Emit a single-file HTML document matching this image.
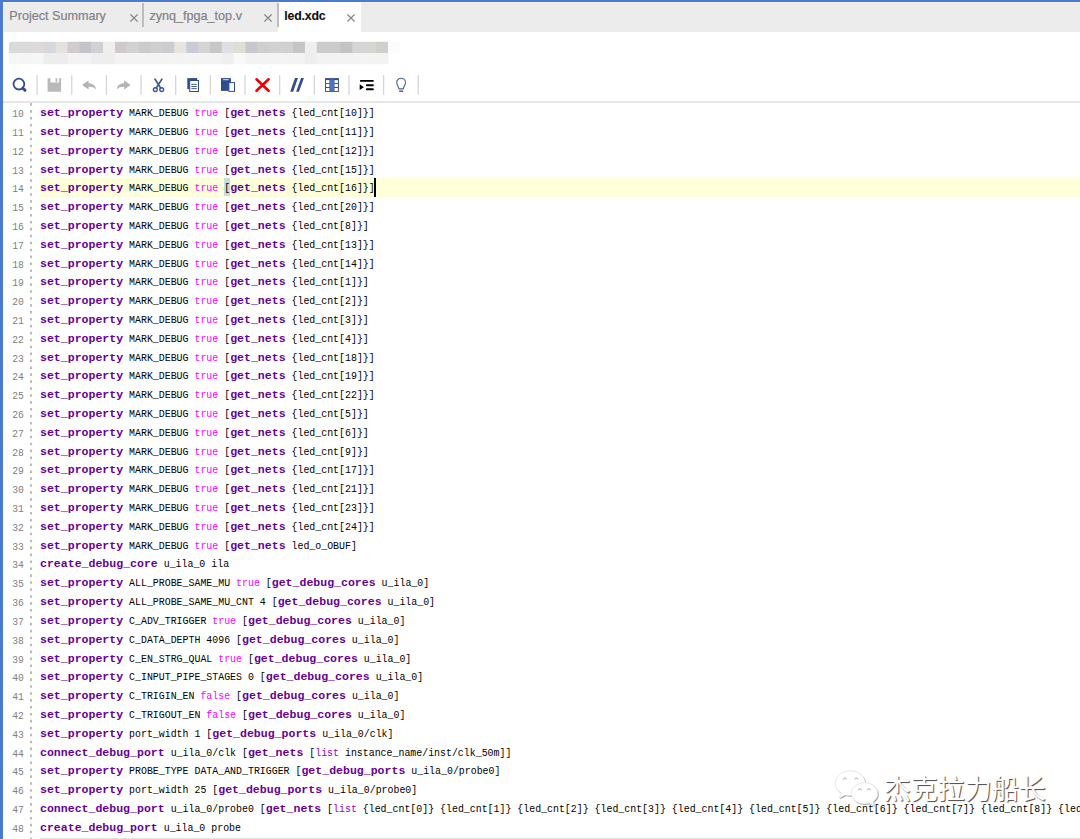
<!DOCTYPE html>
<html lang="en"><head><meta charset="utf-8"><title>led.xdc</title>
<style>
html,body{margin:0;padding:0;background:#fff;overflow:hidden;}
body{width:1080px;height:839px;overflow:hidden;position:relative;font-family:"Liberation Sans",sans-serif;}
#bt{position:absolute;left:0;top:0;width:1080px;height:2px;background:#4a7bd0;}
#bl{position:absolute;left:0;top:0;width:3px;height:839px;background:#4a7bd0;}
#tabs{position:absolute;left:3px;top:2px;width:1077px;height:30px;background:#ececec;box-sizing:border-box;border-left:1px solid #f6f4f0;border-top:1px solid #f3f1ee;}
#act{position:absolute;left:278px;top:2px;width:83px;height:30px;background:#fff;}
.ts{position:absolute;top:3px;width:2px;height:24px;background:#bdbdbd;}
.tl{position:absolute;top:8.8px;font-size:12.6px;line-height:15px;color:#808088;-webkit-text-stroke:0.2px #85858c;white-space:nowrap;}
.tx{position:absolute;top:14px;width:8px;height:8px;}
#hr{position:absolute;left:3px;top:101px;width:1077px;height:2px;background:#e6e6e6;}
#gut{position:absolute;left:30.3px;top:103px;width:2px;height:736px;}
#hl{position:absolute;left:40px;top:178px;width:1040px;height:19px;background:#ffffd9;}
#bm{position:absolute;left:224px;top:178px;width:6px;height:18px;background:#c6dde0;}
#car{position:absolute;left:374.4px;top:178px;width:2px;height:19px;background:#000;}
#sb{position:absolute;left:40px;top:838px;width:1040px;height:1px;background:#e3e3e3;}
.ln{position:absolute;left:1px;width:22.8px;height:12px;font:10px/12px "Liberation Mono",monospace;color:#808080;white-space:pre;text-align:right;transform-origin:100% 9px;transform:scale(0.97,1.16);}
.cl{position:absolute;left:39.8px;width:1300px;height:12px;font:10px/12px "Liberation Mono",monospace;color:#000;white-space:pre;transform-origin:0 9px;transform:scale(0.9903,1.1652);}
.cl b{font-weight:bold;color:#609;font-size:11.67px;display:inline-block;transform:scaleY(0.8499);transform-origin:0 9.1px;}
.cl i{font-style:normal;color:#f0f;}
.cl u{text-decoration:none;color:#90c;}
.ic{position:absolute;}
#wm{position:absolute;left:883.8px;top:770.8px;font:27px/38px "Liberation Sans","Noto Sans CJK SC",sans-serif;color:#fff;text-shadow:1px 1px 0.8px #4a4a4a;white-space:nowrap;}
.mz{position:absolute;}
</style></head>
<body>
<div id="tabs"></div><div id="act"></div>
<div id="bt"></div><div id="bl"></div>
<div class="ts" style="left:142px"></div><div class="ts" style="left:276.5px"></div>
<div class="tl" style="left:9.3px">Project Summary</div>
<div class="tl" style="left:149.5px">zynq_fpga_top.v</div>
<div class="tl" style="left:284.2px;color:#000;font-weight:bold;font-size:12.3px;letter-spacing:-0.15px">led.xdc</div>
<svg class="tx" style="left:129.7px" viewBox="0 0 8 8"><path d="M0.4 0.4L7.6 7.6M7.6 0.4L0.4 7.6" stroke="#8a8a8a" stroke-width="1.3" fill="none"/></svg>
<svg class="tx" style="left:264.4px" viewBox="0 0 8 8"><path d="M0.4 0.4L7.6 7.6M7.6 0.4L0.4 7.6" stroke="#8a8a8a" stroke-width="1.3" fill="none"/></svg>
<svg class="tx" style="left:346.9px" viewBox="0 0 8 8"><path d="M0.4 0.4L7.6 7.6M7.6 0.4L0.4 7.6" stroke="#8a8a8a" stroke-width="1.3" fill="none"/></svg>
<svg class="mz" style="left:0;top:36px" width="420" height="34" viewBox="0 36 420 34"><defs><clipPath id="mc"><rect x="8.9" y="41.5" width="392" height="23" rx="3.5"/></clipPath></defs><g clip-path="url(#mc)"><rect x="8.15" y="41.5" width="12.4" height="11.6" fill="#dbd9da"/><rect x="8.15" y="53" width="12.4" height="11.5" fill="#f6f6f6"/><rect x="20.02" y="41.5" width="12.4" height="11.6" fill="#d9dadc"/><rect x="20.02" y="53" width="12.4" height="11.5" fill="#f5f5f5"/><rect x="31.89" y="41.5" width="12.4" height="11.6" fill="#dedad8"/><rect x="31.89" y="53" width="12.4" height="11.5" fill="#f6f6f6"/><rect x="43.76" y="41.5" width="12.4" height="11.6" fill="#d6d8dc"/><rect x="43.76" y="53" width="12.4" height="11.5" fill="#ededed"/><rect x="55.63" y="41.5" width="12.4" height="11.6" fill="#e4e1de"/><rect x="55.63" y="53" width="12.4" height="11.5" fill="#ededed"/><rect x="67.50" y="41.5" width="12.4" height="11.6" fill="#cfcbcf"/><rect x="67.50" y="53" width="12.4" height="11.5" fill="#f3f3f3"/><rect x="79.37" y="41.5" width="12.4" height="11.6" fill="#c3c4c7"/><rect x="79.37" y="53" width="12.4" height="11.5" fill="#f3f3f3"/><rect x="91.24" y="41.5" width="12.4" height="11.6" fill="#d0d1d4"/><rect x="91.24" y="53" width="12.4" height="11.5" fill="#eeeeee"/><rect x="103.11" y="41.5" width="12.4" height="11.6" fill="#efefee"/><rect x="103.11" y="53" width="12.4" height="11.5" fill="#eeeeee"/><rect x="114.98" y="41.5" width="12.4" height="11.6" fill="#cdc9cc"/><rect x="114.98" y="53" width="12.4" height="11.5" fill="#f3f3f3"/><rect x="126.85" y="41.5" width="12.4" height="11.6" fill="#d0d3d1"/><rect x="126.85" y="53" width="12.4" height="11.5" fill="#f3f3f3"/><rect x="138.72" y="41.5" width="12.4" height="11.6" fill="#cec9cd"/><rect x="138.72" y="53" width="12.4" height="11.5" fill="#f3f3f3"/><rect x="150.59" y="41.5" width="12.4" height="11.6" fill="#cfcfcf"/><rect x="150.59" y="53" width="12.4" height="11.5" fill="#f3f3f3"/><rect x="162.46" y="41.5" width="12.4" height="11.6" fill="#cccbd0"/><rect x="162.46" y="53" width="12.4" height="11.5" fill="#f3f3f3"/><rect x="174.33" y="41.5" width="12.4" height="11.6" fill="#e8e5e0"/><rect x="174.33" y="53" width="12.4" height="11.5" fill="#f3f3f3"/><rect x="186.20" y="41.5" width="12.4" height="11.6" fill="#c9cdd3"/><rect x="186.20" y="53" width="12.4" height="11.5" fill="#f3f3f3"/><rect x="198.07" y="41.5" width="12.4" height="11.6" fill="#d5d3d4"/><rect x="198.07" y="53" width="12.4" height="11.5" fill="#f3f3f3"/><rect x="209.94" y="41.5" width="12.4" height="11.6" fill="#c8c6c8"/><rect x="209.94" y="53" width="12.4" height="11.5" fill="#f3f3f3"/><rect x="221.81" y="41.5" width="12.4" height="11.6" fill="#e0e0e3"/><rect x="221.81" y="53" width="12.4" height="11.5" fill="#efefef"/><rect x="233.68" y="41.5" width="12.4" height="11.6" fill="#dcdfd8"/><rect x="233.68" y="53" width="12.4" height="11.5" fill="#f8f9f8"/><rect x="245.55" y="41.5" width="12.4" height="11.6" fill="#c9c7cb"/><rect x="245.55" y="53" width="12.4" height="11.5" fill="#f3f3f3"/><rect x="257.42" y="41.5" width="12.4" height="11.6" fill="#cfcfcf"/><rect x="257.42" y="53" width="12.4" height="11.5" fill="#f3f3f3"/><rect x="269.29" y="41.5" width="12.4" height="11.6" fill="#d2d0d0"/><rect x="269.29" y="53" width="12.4" height="11.5" fill="#f3f3f3"/><rect x="281.16" y="41.5" width="12.4" height="11.6" fill="#d0d0d0"/><rect x="281.16" y="53" width="12.4" height="11.5" fill="#f3f3f3"/><rect x="293.03" y="41.5" width="12.4" height="11.6" fill="#c6c4c7"/><rect x="293.03" y="53" width="12.4" height="11.5" fill="#f3f3f3"/><rect x="304.90" y="41.5" width="12.4" height="11.6" fill="#efefef"/><rect x="304.90" y="53" width="12.4" height="11.5" fill="#eeeeee"/><rect x="316.77" y="41.5" width="12.4" height="11.6" fill="#cbcbcd"/><rect x="316.77" y="53" width="12.4" height="11.5" fill="#f3f3f3"/><rect x="328.64" y="41.5" width="12.4" height="11.6" fill="#cccacb"/><rect x="328.64" y="53" width="12.4" height="11.5" fill="#f3f3f3"/><rect x="340.51" y="41.5" width="12.4" height="11.6" fill="#c4c2c5"/><rect x="340.51" y="53" width="12.4" height="11.5" fill="#f3f3f3"/><rect x="352.38" y="41.5" width="12.4" height="11.6" fill="#d3d5d6"/><rect x="352.38" y="53" width="12.4" height="11.5" fill="#f3f3f3"/><rect x="364.25" y="41.5" width="12.4" height="11.6" fill="#d5d5d4"/><rect x="364.25" y="53" width="12.4" height="11.5" fill="#f3f3f3"/><rect x="376.12" y="41.5" width="12.4" height="11.6" fill="#d2ceca"/><rect x="376.12" y="53" width="12.4" height="11.5" fill="#f3f3f3"/><rect x="387.99" y="41.5" width="12.4" height="11.6" fill="#fbfcfe"/></g></svg>
<svg class="ic" style="left:0;top:70px" width="440" height="30" viewBox="0 70 440 30">
<path d="M37.10 75.3V94.7 M71.75 75.3V94.7 M106.40 75.3V94.7 M141.05 75.3V94.7 M175.70 75.3V94.7 M210.35 75.3V94.7 M245.00 75.3V94.7 M279.65 75.3V94.7 M314.30 75.3V94.7 M348.95 75.3V94.7 M383.60 75.3V94.7 M418.25 75.3V94.7" stroke="#d6d6d6" stroke-width="1.3" fill="none"/>
<g fill="none" stroke="#2f4d8d">
<circle cx="18.9" cy="84.1" r="5.4" stroke-width="1.8"/>
<path d="M22.9 88.2L25 90.3" stroke-width="3" stroke-linecap="round"/>
</g>
<path d="M47.6 78.3H50.4V82.6H59.1V78.3H61.1V91.7H47.6Z M55.5 78.3H57.2V82H55.5Z" fill="#b9b9b9"/>
<path d="M82.1 85L88.6 80.3V83.2C92.6 83.2 95.7 85.4 95.9 89.4C94.3 87.4 92 86.7 88.6 86.7V89.6Z" fill="#b4b4b4"/>
<path d="M130.6 85L124.1 80.3V83.2C120.1 83.2 117 85.4 116.8 89.4C118.4 87.4 120.7 86.7 124.1 86.7V89.6Z" fill="#b4b4b4"/>
<g fill="none" stroke="#3a5693">
<path d="M155 79.1L160.7 88.1M161.9 79.1L156.2 88.1" stroke-width="1.7" stroke-linecap="round"/>
<circle cx="155.3" cy="89.6" r="1.9" stroke-width="1.4"/><circle cx="161.7" cy="89.6" r="1.9" stroke-width="1.4"/>
</g>
<rect x="187.3" y="78.1" width="9.9" height="11" fill="#2f4d8d"/>
<rect x="189.7" y="80.5" width="8.8" height="11" fill="#fff" stroke="#2f4d8d" stroke-width="1"/>
<path d="M191.3 84.4H196.8M191.3 86.5H196.8M191.3 88.6H196.8" stroke="#2f4d8d" stroke-width="0.9" fill="none"/>
<rect x="221" y="78.1" width="9.9" height="12.8" fill="#2f4d8d"/>
<rect x="223.1" y="79.2" width="5.6" height="1" fill="#d9e0ee"/>
<rect x="228.9" y="82.6" width="5.6" height="8.8" fill="#fff" stroke="#2f4d8d" stroke-width="1"/>
<path d="M256.5 79.3L268.6 90.8M268.6 79.3L256.5 90.8" stroke="#ee0000" stroke-width="2.6" stroke-linecap="round" fill="none"/>
<path d="M295 78.1H298L293.1 91.7H290.2Z M301.1 78.1H303.9L298.9 91.7H296.1Z" fill="#2f4d8d"/>
<rect x="325.05" y="78.1" width="13.85" height="13.8" fill="#2f4d8d"/>
<rect x="329.8" y="79.4" width="4.3" height="11.6" fill="#4f72c0"/>
<g fill="#fff"><rect x="326" y="80.1" width="3.4" height="3"/><rect x="326" y="84" width="3.4" height="3"/><rect x="326" y="88" width="3.4" height="3"/>
<rect x="334.5" y="80.1" width="3.4" height="3"/><rect x="334.5" y="84" width="3.4" height="3"/><rect x="334.5" y="88" width="3.4" height="3"/></g>
<g fill="none" stroke="#000" stroke-width="1.9" stroke-linecap="round"><path d="M360.8 80.9H372.9M366.9 85.25H372.9M366.9 89.25H372.9"/></g>
<path d="M359.7 84.3L363.9 87.2L359.7 90.1Z" fill="#000"/>
<path d="M398.9 88.9C398.9 86.6 396.7 85.5 396.7 82.6A4.4 4.4 0 0 1 405.5 82.6C405.5 85.5 403.3 86.6 403.3 88.9Z" fill="none" stroke="#4a64a0" stroke-width="1.1"/>
<rect x="399.2" y="90.5" width="3.9" height="1.4" fill="#3a5693"/>
</svg>
<div id="hr"></div>
<svg id="gut" viewBox="0 0 2 736"><line x1="1" y1="0" x2="1" y2="736" stroke="#858585" stroke-width="1.1" stroke-dasharray="2.6 4.33" stroke-dashoffset="-0.1" /></svg>
<div id="hl"></div><div id="bm"></div>
<div class="ln" style="top:109.10px">10</div><div class="cl" style="top:107.10px"><b>set_property</b> MARK_DEBUG <i>true</i> [<b>get_nets</b> {led_cnt[10]}]</div>
<div class="ln" style="top:127.91px">11</div><div class="cl" style="top:125.91px"><b>set_property</b> MARK_DEBUG <i>true</i> [<b>get_nets</b> {led_cnt[11]}]</div>
<div class="ln" style="top:146.71px">12</div><div class="cl" style="top:144.71px"><b>set_property</b> MARK_DEBUG <i>true</i> [<b>get_nets</b> {led_cnt[12]}]</div>
<div class="ln" style="top:165.52px">13</div><div class="cl" style="top:163.52px"><b>set_property</b> MARK_DEBUG <i>true</i> [<b>get_nets</b> {led_cnt[15]}]</div>
<div class="ln" style="top:184.33px">14</div><div class="cl" style="top:182.33px"><b>set_property</b> MARK_DEBUG <i>true</i> [<b>get_nets</b> {led_cnt[16]}]</div>
<div class="ln" style="top:203.13px">15</div><div class="cl" style="top:201.13px"><b>set_property</b> MARK_DEBUG <i>true</i> [<b>get_nets</b> {led_cnt[20]}]</div>
<div class="ln" style="top:221.94px">16</div><div class="cl" style="top:219.94px"><b>set_property</b> MARK_DEBUG <i>true</i> [<b>get_nets</b> {led_cnt[8]}]</div>
<div class="ln" style="top:240.75px">17</div><div class="cl" style="top:238.75px"><b>set_property</b> MARK_DEBUG <i>true</i> [<b>get_nets</b> {led_cnt[13]}]</div>
<div class="ln" style="top:259.56px">18</div><div class="cl" style="top:257.56px"><b>set_property</b> MARK_DEBUG <i>true</i> [<b>get_nets</b> {led_cnt[14]}]</div>
<div class="ln" style="top:278.36px">19</div><div class="cl" style="top:276.36px"><b>set_property</b> MARK_DEBUG <i>true</i> [<b>get_nets</b> {led_cnt[1]}]</div>
<div class="ln" style="top:297.17px">20</div><div class="cl" style="top:295.17px"><b>set_property</b> MARK_DEBUG <i>true</i> [<b>get_nets</b> {led_cnt[2]}]</div>
<div class="ln" style="top:315.98px">21</div><div class="cl" style="top:313.98px"><b>set_property</b> MARK_DEBUG <i>true</i> [<b>get_nets</b> {led_cnt[3]}]</div>
<div class="ln" style="top:334.78px">22</div><div class="cl" style="top:332.78px"><b>set_property</b> MARK_DEBUG <i>true</i> [<b>get_nets</b> {led_cnt[4]}]</div>
<div class="ln" style="top:353.59px">23</div><div class="cl" style="top:351.59px"><b>set_property</b> MARK_DEBUG <i>true</i> [<b>get_nets</b> {led_cnt[18]}]</div>
<div class="ln" style="top:372.40px">24</div><div class="cl" style="top:370.40px"><b>set_property</b> MARK_DEBUG <i>true</i> [<b>get_nets</b> {led_cnt[19]}]</div>
<div class="ln" style="top:391.20px">25</div><div class="cl" style="top:389.20px"><b>set_property</b> MARK_DEBUG <i>true</i> [<b>get_nets</b> {led_cnt[22]}]</div>
<div class="ln" style="top:410.01px">26</div><div class="cl" style="top:408.01px"><b>set_property</b> MARK_DEBUG <i>true</i> [<b>get_nets</b> {led_cnt[5]}]</div>
<div class="ln" style="top:428.82px">27</div><div class="cl" style="top:426.82px"><b>set_property</b> MARK_DEBUG <i>true</i> [<b>get_nets</b> {led_cnt[6]}]</div>
<div class="ln" style="top:447.63px">28</div><div class="cl" style="top:445.63px"><b>set_property</b> MARK_DEBUG <i>true</i> [<b>get_nets</b> {led_cnt[9]}]</div>
<div class="ln" style="top:466.43px">29</div><div class="cl" style="top:464.43px"><b>set_property</b> MARK_DEBUG <i>true</i> [<b>get_nets</b> {led_cnt[17]}]</div>
<div class="ln" style="top:485.24px">30</div><div class="cl" style="top:483.24px"><b>set_property</b> MARK_DEBUG <i>true</i> [<b>get_nets</b> {led_cnt[21]}]</div>
<div class="ln" style="top:504.05px">31</div><div class="cl" style="top:502.05px"><b>set_property</b> MARK_DEBUG <i>true</i> [<b>get_nets</b> {led_cnt[23]}]</div>
<div class="ln" style="top:522.85px">32</div><div class="cl" style="top:520.85px"><b>set_property</b> MARK_DEBUG <i>true</i> [<b>get_nets</b> {led_cnt[24]}]</div>
<div class="ln" style="top:541.66px">33</div><div class="cl" style="top:539.66px"><b>set_property</b> MARK_DEBUG <i>true</i> [<b>get_nets</b> led_o_OBUF]</div>
<div class="ln" style="top:560.47px">34</div><div class="cl" style="top:558.47px"><b>create_debug_core</b> u_ila_0 ila</div>
<div class="ln" style="top:579.27px">35</div><div class="cl" style="top:577.27px"><b>set_property</b> ALL_PROBE_SAME_MU <i>true</i> [<b>get_debug_cores</b> u_ila_0]</div>
<div class="ln" style="top:598.08px">36</div><div class="cl" style="top:596.08px"><b>set_property</b> ALL_PROBE_SAME_MU_CNT 4 [<b>get_debug_cores</b> u_ila_0]</div>
<div class="ln" style="top:616.89px">37</div><div class="cl" style="top:614.89px"><b>set_property</b> C_ADV_TRIGGER <i>true</i> [<b>get_debug_cores</b> u_ila_0]</div>
<div class="ln" style="top:635.70px">38</div><div class="cl" style="top:633.70px"><b>set_property</b> C_DATA_DEPTH 4096 [<b>get_debug_cores</b> u_ila_0]</div>
<div class="ln" style="top:654.50px">39</div><div class="cl" style="top:652.50px"><b>set_property</b> C_EN_STRG_QUAL <i>true</i> [<b>get_debug_cores</b> u_ila_0]</div>
<div class="ln" style="top:673.31px">40</div><div class="cl" style="top:671.31px"><b>set_property</b> C_INPUT_PIPE_STAGES 0 [<b>get_debug_cores</b> u_ila_0]</div>
<div class="ln" style="top:692.12px">41</div><div class="cl" style="top:690.12px"><b>set_property</b> C_TRIGIN_EN <i>false</i> [<b>get_debug_cores</b> u_ila_0]</div>
<div class="ln" style="top:710.92px">42</div><div class="cl" style="top:708.92px"><b>set_property</b> C_TRIGOUT_EN <i>false</i> [<b>get_debug_cores</b> u_ila_0]</div>
<div class="ln" style="top:729.73px">43</div><div class="cl" style="top:727.73px"><b>set_property</b> port_width 1 [<b>get_debug_ports</b> u_ila_0/clk]</div>
<div class="ln" style="top:748.54px">44</div><div class="cl" style="top:746.54px"><b>connect_debug_port</b> u_ila_0/clk [<b>get_nets</b> [<u>list</u> instance_name/inst/clk_50m]]</div>
<div class="ln" style="top:767.35px">45</div><div class="cl" style="top:765.35px"><b>set_property</b> PROBE_TYPE DATA_AND_TRIGGER [<b>get_debug_ports</b> u_ila_0/probe0]</div>
<div class="ln" style="top:786.15px">46</div><div class="cl" style="top:784.15px"><b>set_property</b> port_width 25 [<b>get_debug_ports</b> u_ila_0/probe0]</div>
<div class="ln" style="top:804.96px">47</div><div class="cl" style="top:802.96px"><b>connect_debug_port</b> u_ila_0/probe0 [<b>get_nets</b> [<u>list</u> {led_cnt[0]} {led_cnt[1]} {led_cnt[2]} {led_cnt[3]} {led_cnt[4]} {led_cnt[5]} {led_cnt[6]} {led_cnt[7]} {led_cnt[8]} {led_cnt[9]}</div>
<div class="ln" style="top:823.77px">48</div><div class="cl" style="top:821.77px"><b>create_debug_port</b> u_ila_0 probe</div>
<div id="car"></div><div id="sb"></div>
<svg class="ic" style="left:830px;top:766px" width="56" height="44" viewBox="830 766 56 44">
<path transform="translate(0.9 0.9)" fill="#9a9a9a" d="M850.3 770.8c-8.4 0-15.1 5.6-15.1 12.5 0 3.9 2.2 7.4 5.7 9.7l-1.6 5.3 5.9-3.3c1.6 0.5 3.3 0.8 5.1 0.8 8.4 0 15.1-5.6 15.1-12.5s-6.7-12.5-15.1-12.5z"/>
<path fill="#fff" stroke="#dedede" stroke-width="0.7" d="M850.3 770.8c-8.4 0-15.1 5.6-15.1 12.5 0 3.9 2.2 7.4 5.7 9.7l-1.6 5.3 5.9-3.3c1.6 0.5 3.3 0.8 5.1 0.8 8.4 0 15.1-5.6 15.1-12.5s-6.7-12.5-15.1-12.5z"/>
<path transform="translate(0.9 0.9)" fill="#9a9a9a" d="M864.6 782.7c7.4 0 13.3 4.8 13.3 10.8 0 3.3-1.8 6.2-4.7 8.2l1.3 4.3-4.9-2.7c-1.6 0.5-3.2 0.8-5 0.8-7.4 0-13.3-4.8-13.3-10.8s5.9-10.6 13.3-10.6z"/>
<path fill="#fff" stroke="#dedede" stroke-width="0.7" d="M864.6 782.7c7.4 0 13.3 4.8 13.3 10.8 0 3.3-1.8 6.2-4.7 8.2l1.3 4.3-4.9-2.7c-1.6 0.5-3.2 0.8-5 0.8-7.4 0-13.3-4.8-13.3-10.8s5.9-10.6 13.3-10.6z"/>
<g fill="none" stroke="#b0b0b0" stroke-width="1"><path d="M843.3 779.5a1.5 1.5 0 0 1 3 0M854.8 779.5a1.5 1.5 0 0 1 3 0M858.3 790.3a1.5 1.5 0 0 1 3 0M867.5 790.3a1.5 1.5 0 0 1 3 0"/></g>
</svg>
<div id="wm">杰克拉力船长</div>
</body></html>
